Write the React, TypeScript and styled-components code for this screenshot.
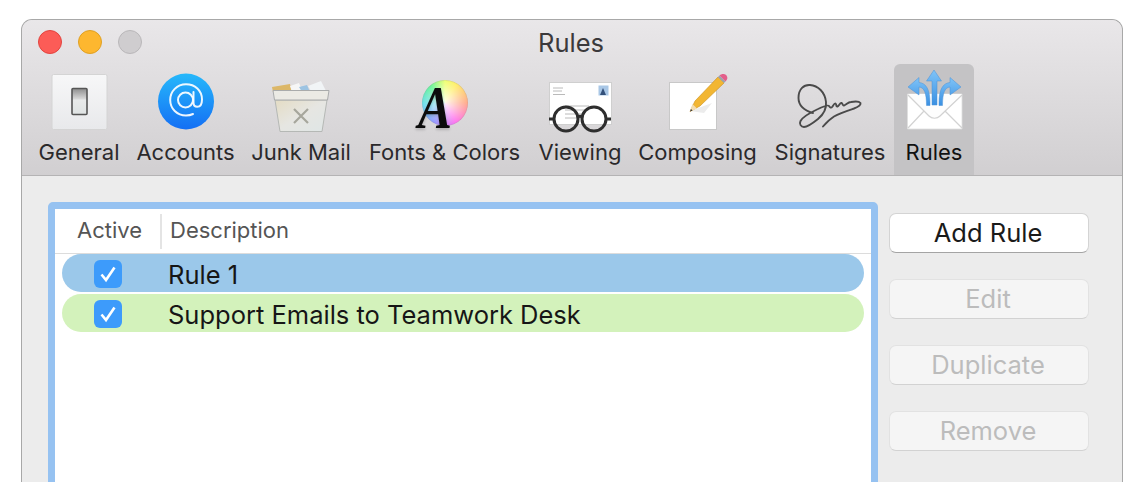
import React from "react";
import styled, { createGlobalStyle } from "styled-components";

const Global = createGlobalStyle`
  html, body { margin: 0; padding: 0; background: #fff; height: 482px; overflow: hidden; }
  #root { height: 482px; overflow: hidden; }
`;

const Page = styled.div`
  padding: 19px 23px 0 21px;
  height: 482px;
  box-sizing: border-box;
  font-family: Inter, "Liberation Sans", sans-serif;
  color: #222;
`;

const Window = styled.div`
  height: 500px;
  box-sizing: border-box;
  border: 1px solid #a8a8a8;
  border-bottom: none;
  border-radius: 11px 11px 0 0;
  overflow: hidden;
  background: #ececec;
  display: flex;
  flex-direction: column;
`;

const Chrome = styled.header`
  height: 156px;
  box-sizing: border-box;
  background: linear-gradient(#e9e7e9, #d1cfd1);
  border-bottom: 1px solid #b4b3b4;
  display: flex;
  flex-direction: column;
`;

const TitleRow = styled.div`
  height: 44px;
  flex: none;
  display: flex;
  align-items: center;
  position: relative;
  padding: 0 0 0 16px;
  gap: 16px;
`;

const Light = styled.span<{ $bg: string; $edge: string }>`
  width: 24px;
  height: 24px;
  box-sizing: border-box;
  border-radius: 50%;
  background: ${(p) => p.$bg};
  border: 1px solid ${(p) => p.$edge};
`;

const Title = styled.div`
  position: absolute;
  left: 0;
  right: 2px;
  top: 7px;
  text-align: center;
  font-size: 25.5px;
  line-height: 32px;
  color: #3b393b;
`;

const Toolbar = styled.nav`
  display: flex;
  flex: 1;
  padding-left: 9px;
`;

const ToolItem = styled.div<{ $w: number; $active?: boolean }>`
  width: ${(p) => p.$w}px;
  flex: none;
  display: flex;
  flex-direction: column;
  align-items: center;
  box-sizing: border-box;
  height: 111px;
  border-radius: 6px 6px 0 0;
  background: ${(p) => (p.$active ? "#c4c3c5" : "transparent")};
  color: ${(p) => (p.$active ? "#111" : "#2b292b")};
  svg { display: block; flex: none; overflow: visible; }
`;

const IconSlot = styled.div`
  width: 64px;
  height: 64px;
  margin-top: 6px;
  position: relative;
  flex: none;
`;

const Label = styled.div`
  font-size: 22px;
  line-height: 28px;
  margin-top: 4px;
  white-space: nowrap;
`;

const Wheel = styled.div`
  position: absolute;
  left: 9.5px;
  top: 10px;
  width: 46px;
  height: 46px;
  border-radius: 50%;
  background:
    radial-gradient(circle, rgba(255,255,255,.9) 0%, rgba(255,255,255,.4) 55%, rgba(255,255,255,0) 100%),
    conic-gradient(#e8ff40, #ffe830 30deg, #ff8a60 90deg, #ff40e8 150deg, #6a70ff 210deg, #30d0e8 265deg, #30f070 320deg, #e8ff40);
  box-shadow: inset 0 0 1px #888;
`;

const FontA = styled.span`
  position: absolute;
  left: 5px;
  top: 7px;
  font-family: "Liberation Serif", serif;
  font-style: italic;
  font-weight: 700;
  font-size: 62px;
  line-height: 60px;
  color: #0c0c0c;
  transform: scaleX(0.82);
  transform-origin: left center;
  text-shadow: 0 2px 3px rgba(0,0,0,.18);
`;

const Content = styled.main`
  flex: 1;
  display: flex;
  align-items: stretch;
  padding: 26px 33px 0 26px;
  gap: 11px;
`;

const TablePanel = styled.section`
  width: 830px;
  flex: none;
  box-sizing: border-box;
  border: 7px solid #96c2f1;
  border-radius: 5px;
  background: #fff;
`;

const TableHead = styled.div`
  height: 45px;
  box-sizing: border-box;
  display: flex;
  align-items: center;
  border-bottom: 1px solid #dcdcdc;
  font-size: 22px;
  color: #555;
`;

const HeadCell = styled.div<{ $w?: number }>`
  width: ${(p) => (p.$w ? `${p.$w}px` : "auto")};
  flex: ${(p) => (p.$w ? "none" : 1)};
  height: 35px;
  line-height: 33px;
  box-sizing: border-box;
  padding-left: ${(p) => (p.$w ? "22px" : "8px")};
  border-left: ${(p) => (p.$w ? "none" : "2px solid #e4e4e4")};
`;

const Rows = styled.div`
  padding: 0 7px 0 7px;
  display: flex;
  flex-direction: column;
  gap: 2px;
`;

const Row = styled.div<{ $bg: string }>`
  height: 38px;
  box-sizing: border-box;
  padding-top: 2px;
  border-radius: 19px;
  background: ${(p) => p.$bg};
  display: flex;
  align-items: center;
  padding-left: 32px;
  font-size: 25.5px;
  color: #161616;
`;

const Check = styled.span`
  width: 28px;
  height: 28px;
  border-radius: 6px;
  background: #3d9bfb;
  display: flex;
  align-items: center;
  justify-content: center;
  margin-right: 46px;
  flex: none;
`;

const Actions = styled.aside`
  padding-top: 11px;
  width: 200px;
  flex: none;
  display: flex;
  flex-direction: column;
  gap: 26px;
`;

const Action = styled.button<{ $on?: boolean }>`
  height: 40px;
  box-sizing: border-box;
  border-radius: 7px;
  padding: 0 2px 2px 0;
  font-family: inherit;
  font-size: 25.5px;
  border: 1px solid ${(p) => (p.$on ? "#d4d4d4" : "#e2e2e2")};
  border-bottom-color: ${(p) => (p.$on ? "#a4a4a4" : "#d2d2d2")};
  background: ${(p) => (p.$on ? "#fff" : "#f5f5f5")};
  color: ${(p) => (p.$on ? "#1a1a1a" : "#bcbcbc")};
`;

const SwitchIcon = () => (
  <svg width="64" height="64" viewBox="0 0 64 64">
    <defs>
      <linearGradient id="gBox" x1="0" y1="0" x2="0" y2="1">
        <stop offset="0" stopColor="#f7f7f8" />
        <stop offset="1" stopColor="#e8e9eb" />
      </linearGradient>
      <linearGradient id="gSw" x1="0" y1="0" x2="0" y2="1">
        <stop offset="0" stopColor="#8d8d8d" />
        <stop offset=".4" stopColor="#d8d8d8" />
        <stop offset=".44" stopColor="#e8eaea" />
        <stop offset="1" stopColor="#dfe3e3" />
      </linearGradient>
    </defs>
    <rect x="5" y="4.5" width="55" height="55" rx="1.5" fill="url(#gBox)" stroke="#d4d4d4" />
    <rect x="25" y="18.5" width="15" height="26" rx="1" fill="url(#gSw)" stroke="#555" strokeWidth="1.6" />
  </svg>
);

const AccountsIcon = () => (
  <svg width="64" height="64" viewBox="0 0 64 64">
    <defs>
      <linearGradient id="gAt" x1="0" y1="0" x2="0" y2="1">
        <stop offset="0" stopColor="#26b8fb" />
        <stop offset="1" stopColor="#146ff4" />
      </linearGradient>
    </defs>
    <circle cx="32" cy="31.5" r="28" fill="url(#gAt)" />
    <g fill="none" stroke="#fff" strokeOpacity=".92" strokeWidth="2" strokeLinecap="round">
      <circle cx="31.5" cy="30" r="7.5" />
      <path d="M39.5 22v10.500c0 2.800 1.800 4.300 3.700 4.300 3.300 0 4.800-3.200 4.800-7.300 0-9-7-15.200-16-15.200-9 0-15.800 7-15.800 15.700s6.800 15.500 15.800 15.500c2.800 0 5-.5 7-1.500" />
    </g>
  </svg>
);

const JunkIcon = () => (
  <svg width="64" height="64" viewBox="0 0 64 64">
    <defs>
      <linearGradient id="gBin" x1="0" y1="0" x2="1" y2="1">
        <stop offset="0" stopColor="#e4dcc4" />
        <stop offset=".5" stopColor="#e6e6e2" />
        <stop offset="1" stopColor="#dfe6e6" />
      </linearGradient>
    </defs>
    <path d="M3 17l18-3 2 8H4z" fill="#dcb768" />
    <path d="M21 16l9-3 4 9H23z" fill="#f6f6f6" />
    <path d="M30 17l8-2 3 7H33z" fill="#9cc3e2" />
    <path d="M39 16l13-5 5 10H42z" fill="#f1f4f6" />
    <path d="M6 30L11 61.5H53L58 30z" fill="url(#gBin)" stroke="#b5b8b5" />
    <path d="M4 20.5H60L58.5 30H5.5z" fill="#ebeae4" stroke="#a9abab" />
    <path d="M25 39L39 53M39 39L25 53" stroke="#a6a69c" strokeWidth="2.2" />
  </svg>
);

const ViewingIcon = () => (
  <svg width="64" height="64" viewBox="0 0 64 64">
    <rect x="1.5" y="12.5" width="62" height="42" fill="#fff" stroke="#cfcfcf" />
    <g stroke="#a8a8a8" strokeWidth=".8">
      <path d="M5 18h10M5 21h9M5 24.5h12" />
      <path d="M17 36h24M17 40h21M17 44h20M17 48h16" />
    </g>
    <rect x="50.5" y="15.5" width="10" height="10" fill="#a9c7e6" />
    <path d="M52 25l3-7 3 7z" fill="#33507a" />
    <g fill="none" stroke="#2e2e2e" strokeWidth="3">
      <circle cx="18" cy="49" r="12" />
      <circle cx="46" cy="49" r="12" />
      <path d="M29.5 47q2.500-1.500 5 0M1 49H6M58 49h5" />
    </g>
  </svg>
);

const ComposingIcon = () => (
  <svg width="64" height="64" viewBox="0 0 64 64">
    <rect x="3.5" y="12.5" width="47" height="47" fill="#fff" stroke="#c8c8c8" />
    <path d="M24 41l22-8-8 10z" fill="#ececec" />
    <path d="M24 41.5L29 31 52 7l6 6-24 23z" fill="#f2b632" stroke="#c98e1c" strokeWidth=".6" />
    <path d="M24 41.5L26.5 34 31 38.5z" fill="#f3dcb0" />
    <path d="M24 41.5L25 39 26.5 40.5z" fill="#333" />
    <path d="M52 7l6 6 1.5-1.500-6-6z" fill="#9aa4ad" />
    <path d="M53.5 5.500l6 6c2-2 2.500-4 1-6s-5-2-7 0z" fill="#e35f8b" />
  </svg>
);

const SignatureIcon = () => (
  <svg width="64" height="64" viewBox="0 0 64 64">
    <path
      d="M15 43C5 40 .5 35 .5 28C.5 19 6 14.500 12 15C20 15.600 27 22 28 32C28.600 38 26 44 20 49C15 53 10 57 6 57C3 57 1 54 2.500 51C4.500 47 11.500 43 20 39C26 36 30 34.500 31 36C32 37.500 33 38.500 34.500 36.500C35.500 35 36.500 33 37.500 33.500C38.500 34 38 37 39.500 36.500C41 36 42 32.500 43.500 33C45 33.500 44.500 36 46 35.500C48 35 50 32 53 32C56 31.500 61 31 62.500 33C63 35 60 37 56 38.500C50 40.500 42 43 36 46.500C32 49 28 53 25 56.500"
      fill="none"
      stroke="#4a4a4a"
      strokeWidth="1.9"
      strokeLinecap="round"
      strokeLinejoin="round"
    />
  </svg>
);

const RulesIcon = () => (
  <svg width="64" height="64" viewBox="0 0 64 64">
    <defs>
      <linearGradient id="gArrow" x1="0" y1="0" x2="0" y2="1">
        <stop offset="0" stopColor="#80c4f8" />
        <stop offset="1" stopColor="#3a90e2" />
      </linearGradient>
    </defs>
    <path d="M5.5 24H60V59H5.500z" fill="#fff" stroke="#dedede" strokeWidth=".8" />
    <path d="M6 24L27 47c3 3 8 3 11 0L60 24z" fill="#fdfdfd" />
    <path d="M6 25L27 46c3 3 8 3 11 0L60 25M6 58L22 41M60 58L43 41" fill="none" stroke="#d2d2d2" strokeWidth="1.2" />
    <g fill="url(#gArrow)" stroke="#4a90d6" strokeWidth=".5">
      <path d="M32 0l7.500 11H35V35h-5V11h-5.500z" />
      <path d="M6 17L17 7.500v5c7 .5 11 7 11 20v3h-3.500c0-13-2.500-18-7.500-18.500v8z" />
      <path d="M59 17L48 7.500v5c-7 .5-11 7-11 20v3h3.500c0-13 2.500-18 7.500-18.500v8z" />
    </g>
  </svg>
);

const CheckMark = () => (
  <svg width="20" height="20" viewBox="0 0 20 20">
    <path d="M3.5 10.500L8 16 16.500 3.500" fill="none" stroke="#fff" strokeWidth="2.6" />
  </svg>
);

const tools = [
  { label: "General", w: 96, icon: <SwitchIcon /> },
  { label: "Accounts", w: 117, icon: <AccountsIcon /> },
  { label: "Junk Mail", w: 114, icon: <JunkIcon /> },
  {
    label: "Fonts & Colors",
    w: 173,
    icon: (
      <>
        <Wheel />
        <FontA>A</FontA>
      </>
    ),
  },
  { label: "Viewing", w: 98, icon: <ViewingIcon /> },
  { label: "Composing", w: 137, icon: <ComposingIcon /> },
  { label: "Signatures", w: 128, icon: <SignatureIcon /> },
  { label: "Rules", w: 80, icon: <RulesIcon />, active: true },
];

export default function App() {
  return (
    <Page>
      <Global />
      <Window>
        <Chrome>
          <TitleRow>
            <Light $bg="#fc5c57" $edge="#e2443f" />
            <Light $bg="#fdb72f" $edge="#dfa023" />
            <Light $bg="#cfcdcf" $edge="#b9b7b9" />
            <Title>Rules</Title>
          </TitleRow>
          <Toolbar>
            {tools.map((t) => (
              <ToolItem key={t.label} $w={t.w} $active={t.active}>
                <IconSlot>{t.icon}</IconSlot>
                <Label>{t.label}</Label>
              </ToolItem>
            ))}
          </Toolbar>
        </Chrome>
        <Content>
          <TablePanel>
            <TableHead>
              <HeadCell $w={105}>Active</HeadCell>
              <HeadCell>Description</HeadCell>
            </TableHead>
            <Rows>
              <Row $bg="#9bc8ea">
                <Check><CheckMark /></Check>
                Rule 1
              </Row>
              <Row $bg="#d3f2bb">
                <Check><CheckMark /></Check>
                Support Emails to Teamwork Desk
              </Row>
            </Rows>
          </TablePanel>
          <Actions>
            <Action $on>Add Rule</Action>
            <Action disabled>Edit</Action>
            <Action disabled>Duplicate</Action>
            <Action disabled>Remove</Action>
          </Actions>
        </Content>
      </Window>
    </Page>
  );
}
